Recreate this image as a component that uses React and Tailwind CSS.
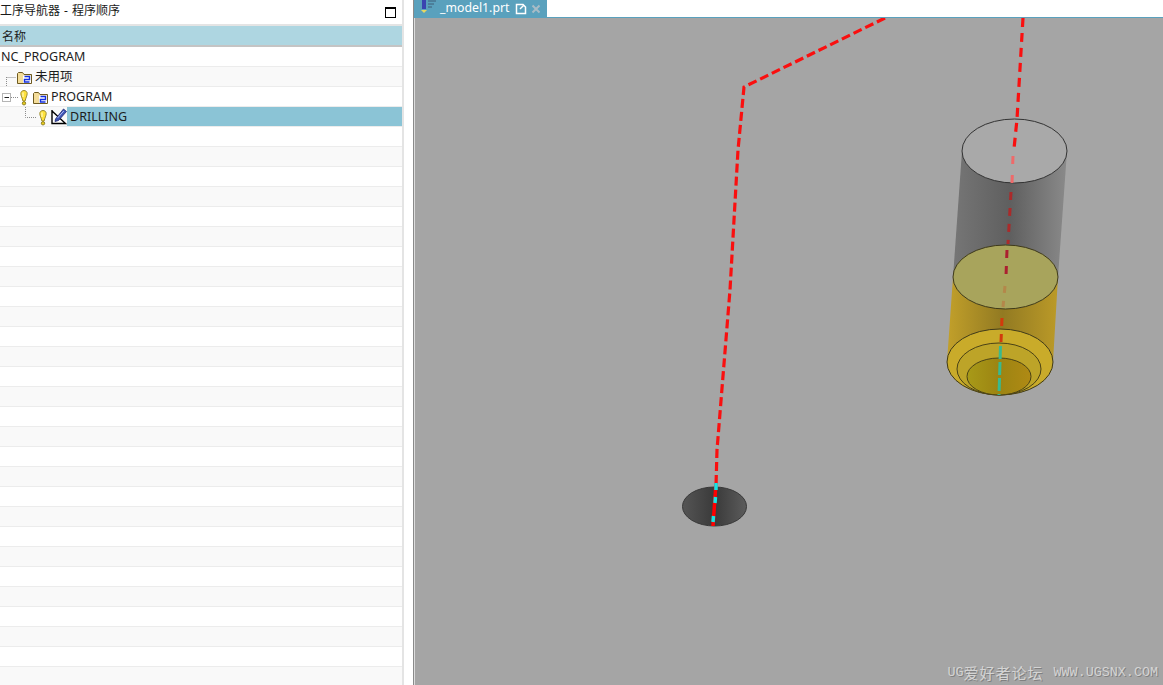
const font = "font-['Noto_Sans','Noto_Sans_CJK_SC',sans-serif]";

function Bulb({ x }) {
  return (
    <g transform={`translate(${x} 3)`}>
      <path d="M0.800 3.500C0.800 1.500 2.500 0.500 4 0.500S7.200 1.500 7.200 3.500C7.200 5.500 5.700 8 5.100 11H2.900C2.300 8 0.800 5.500 0.800 3.500Z" fill="#ffe23c" stroke="#9a8a30" strokeWidth="1" />
      <path d="M3 2.500V7" stroke="#fff8c0" strokeWidth="1.200" />
      <circle cx="4" cy="13.300" r="1.700" fill="#e8cc20" stroke="#7a6c18" strokeWidth="0.800" />
    </g>
  );
}

function Folder({ x, y }) {
  return (
    <g transform={`translate(${x} ${y})`}>
      <path d="M0.500 2.500V12.500H14.500V3.500H7L5.500 1.500H1.500Z" fill="#f4dd9a" stroke="#6e5a20" strokeWidth="1" />
      <rect x="6" y="4.500" width="8" height="7.500" fill="#fff" />
      <path d="M7.500 5.500H12.500V8.500H7.500V11H12.500" fill="none" stroke="#1430e0" strokeWidth="1.400" />
    </g>
  );
}

function EditIcon({ x, y }) {
  return (
    <g transform={`translate(${x} ${y})`}>
      <path d="M1 2V15.500H14.500L1 3" fill="#fff" stroke="#000" strokeWidth="1.400" />
      <path d="M4.500 11L12.500 1L15.500 3.500L7.500 12.500L4 13.500Z" fill="#3f55b8" stroke="#20276e" strokeWidth="0.800" />
      <path d="M6.500 10L12.800 3" stroke="#b0bcf0" strokeWidth="1" />
    </g>
  );
}

const dot = { stroke: "#8c8c8c", strokeWidth: 1, strokeDasharray: "1 1" };

function Row({ index, width, icons, label, selected, labelClass }) {
  return (
    <div className={`h-5 shrink-0 flex items-stretch border-b border-[#ececec] ${index % 2 === 0 ? "bg-white" : "bg-[#f9f9f9]"}`}>
      {width > 0 && (
        <svg width={width} height="20" className="shrink-0 block">
          {icons}
        </svg>
      )}
      <div className={`flex-1 flex items-center pt-px text-[12.5px] leading-none text-[#1d1d1d] ${selected ? "bg-[#8bc4d6]" : ""} ${labelClass}`}>
        {label}
      </div>
    </div>
  );
}

function Scene() {
  return (
    <svg viewBox="415 18 748 667" className="block w-full h-full">
      <defs>
        <linearGradient id="greyBody" x1="0" x2="1" y1="0" y2="0">
          <stop offset="0" stopColor="#767676" />
          <stop offset="0.5" stopColor="#5f5f5f" />
          <stop offset="1" stopColor="#8a8a8a" />
        </linearGradient>
        <linearGradient id="yellowBody" x1="0" x2="1" y1="0" y2="0">
          <stop offset="0" stopColor="#c2a02a" />
          <stop offset="0.5" stopColor="#927a22" />
          <stop offset="1" stopColor="#bb9a28" />
        </linearGradient>
        <linearGradient id="hole" x1="0" x2="1" y1="0" y2="0">
          <stop offset="0" stopColor="#555555" />
          <stop offset="0.5" stopColor="#3a3a3a" />
          <stop offset="1" stopColor="#5c5c5c" />
        </linearGradient>
        <linearGradient id="innerCup" x1="0" x2="1" y1="0" y2="0">
          <stop offset="0" stopColor="#a89a18" />
          <stop offset="0.5" stopColor="#9c8412" />
          <stop offset="1" stopColor="#b08a14" />
        </linearGradient>
      </defs>

      <path d="M962 151L953 277H1058L1067 151Z" fill="url(#greyBody)" />
      <ellipse cx="1014.500" cy="151" rx="52.500" ry="32" fill="#a9a9a9" stroke="#333" strokeWidth="1" />

      <path d="M953 277L947 362C947 380 970 395 1000 395C1030 395 1053 380 1053 362L1058 277Z" fill="url(#yellowBody)" />
      <ellipse cx="1005.500" cy="277" rx="52.500" ry="32" fill="#a8a45c" stroke="#3f3a1a" strokeWidth="1" />

      <ellipse cx="1000" cy="362" rx="53" ry="33" fill="#c9ab2a" stroke="#3f3a1a" strokeWidth="1" />
      <ellipse cx="999" cy="369" rx="42" ry="26" fill="#bda428" stroke="#4a4216" strokeWidth="1" />
      <ellipse cx="999" cy="376.500" rx="32" ry="18.500" fill="url(#innerCup)" stroke="#4a4216" strokeWidth="1" />

      <polyline points="885,18 744,87 738,150 730,290 717,450 716,486" fill="none" stroke="#fa0f0f" strokeWidth="3.200" strokeDasharray="9 4" />

      <ellipse cx="714.500" cy="506.500" rx="32" ry="19.500" fill="url(#hole)" stroke="#383838" strokeWidth="1" />
      <line x1="716" y1="483" x2="713" y2="526" stroke="#ff0000" strokeWidth="3.500" />
      <path d="M716 483V490M715.500 497L715 503M713.500 516L713 522" stroke="#12e6e6" strokeWidth="3.500" fill="none" />

      <polyline points="1023,18 1017,119 1014,149" fill="none" stroke="#fa0f0f" strokeWidth="3.200" strokeDasharray="9 6" />
      <polyline points="1013,156 1012,183" fill="none" stroke="#ee6a6a" strokeWidth="3" strokeDasharray="8 11" />
      <polyline points="1011,192 1008,244" fill="none" stroke="#ab2a2a" strokeWidth="3" strokeDasharray="8 8" />
      <polyline points="1007,250 1006,276" fill="none" stroke="#ab2030" strokeWidth="3" strokeDasharray="8 8" />
      <polyline points="1005,286 1003,307" fill="none" stroke="#b4874a" strokeWidth="3" strokeDasharray="7 8" />
      <polyline points="1002,318 1001,342" fill="none" stroke="#d23a0c" strokeWidth="3" strokeDasharray="8 8" />
      <path d="M1000.500 346L999 395" stroke="#39b98f" strokeWidth="3" strokeDasharray="13 3" fill="none" />
    </svg>
  );
}

export default function App() {
  const rows = Array.from({ length: 28 });
  return (
    <div className={`w-[1163px] h-[685px] overflow-hidden flex bg-white ${font}`}>
      <div className="w-[404px] shrink-0 flex flex-col border-r-2 border-[#e4e4e4]">
        <div className="h-6 shrink-0 flex items-center justify-between pr-[6px] pb-[2px] text-xs text-[#1a1a1a]">
          <span className="[word-spacing:1px]">工序导航器 - 程序顺序</span>
          <span className="w-[11px] h-[11px] mt-[2px] border border-t-2 border-black" />
        </div>
        <div className="h-[2px] shrink-0 bg-[#e4e4e4]" />
        <div className="h-[21px] shrink-0 flex items-center pl-[2px] pt-[2px] bg-[#aed6e1] border-b-2 border-[#c4c4c4] text-xs text-[#1d1d1d]">名称</div>
        <Row index={0} width={0} label="NC_PROGRAM" labelClass="pl-px" />
        <Row
          index={1}
          width={35}
          label="未用项"
          labelClass="text-xs"
          icons={
            <>
              <path d="M6.500 10V20M6.500 10.500H16" fill="none" {...dot} />
              <Folder x={17} y={4} />
            </>
          }
        />
        <Row
          index={0}
          width={51}
          label="PROGRAM"
          icons={
            <>
              <rect x="2.500" y="6.500" width="8" height="8" fill="#fff" stroke="#b5b5b5" />
              <path d="M4.500 10.500H9" stroke="#222" strokeWidth="1" />
              <path d="M11 10.500H18" fill="none" {...dot} />
              <Bulb x={20} />
              <Folder x={33} y={4} />
            </>
          }
        />
        <Row
          index={1}
          width={67}
          selected
          label="DRILLING"
          labelClass="pl-[3px]"
          icons={
            <>
              <path d="M25.500 0V10.500H36" fill="none" {...dot} />
              <Bulb x={39} />
              <EditIcon x={51} y={1} />
            </>
          }
        />
        {rows.map((_, i) => (
          <Row key={i} index={i} width={0} label="" />
        ))}
      </div>

      <div className="w-[9px] shrink-0 bg-white" />

      <div className="flex-1 min-w-0 flex flex-col border-l border-[#8a8a8a]">
        <div className="h-[18px] shrink-0 flex items-start bg-white border-b border-[#5aa1bd]">
          <div className="w-[133px] h-[17px] bg-[#5aa1bd] flex items-center text-white text-[12.3px] leading-none">
            <svg width="24" height="17" viewBox="0 0 24 17" className="ml-[5px] shrink-0">
              <rect x="3" y="0" width="4" height="9" fill="#3a44b0" />
              <path d="M9 1H17M9 4H15M9 7H13" stroke="#3f5f78" strokeWidth="1" />
              <path d="M2 10H8L5 13Z" fill="#e8d860" />
            </svg>
            <span className="-ml-[3px]">_model1.prt</span>
            <svg width="12" height="12" viewBox="0 0 12 12" className="ml-[6px] shrink-0">
              <path d="M1.500 1.500H8L10.500 4V10.500H1.500Z" fill="none" stroke="#fff" strokeWidth="1.500" />
              <path d="M5 6L9 2" stroke="#fff" strokeWidth="1.500" />
            </svg>
            <svg width="10" height="10" viewBox="0 0 10 10" className="ml-[4px] shrink-0">
              <path d="M1.500 1.500L8.500 8.500M8.500 1.500L1.500 8.500" stroke="#a8bcc6" strokeWidth="2" />
            </svg>
          </div>
        </div>
        <div className="relative flex-1 min-h-0 bg-[#a5a5a5] border-l border-[#dcdcdc]">
          <Scene />
          <div className="absolute right-[5px] bottom-[4px] flex items-center whitespace-nowrap text-[13.4px] leading-4 text-[#d4d4d4] font-['Liberation_Mono','Noto_Sans_CJK_SC',monospace] [text-shadow:1px_1px_0_#808080]">
            UG<span className="text-[15px] tracking-[1px] mr-[2px] font-['Noto_Sans_CJK_SC',serif]">爱好者论坛</span>&nbsp;WWW.UGSNX.COM
          </div>
        </div>
      </div>
    </div>
  );
}
